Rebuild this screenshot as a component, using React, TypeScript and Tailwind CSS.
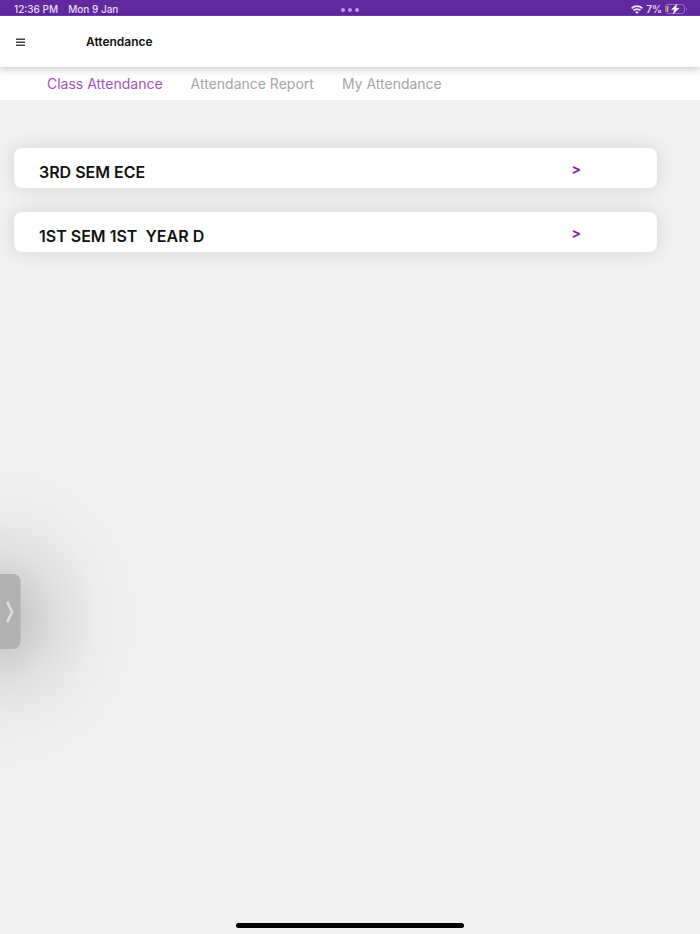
import { useState } from 'react';

const tabs = ['Class Attendance', 'Attendance Report', 'My Attendance'];

const classes = ['3RD SEM ECE', '1ST SEM 1ST  YEAR D'];

function StatusBar() {
	return (
		<div className="relative flex h-4 items-center justify-between border-b border-[#7540b5] bg-[#6128a0] pt-[3px] pr-3 pl-3.5 text-[10px] leading-3 font-medium text-[#e9def5]">
			<div className="flex gap-2.5">
				<span>12:36 PM</span>
				<span>Mon 9 Jan</span>
			</div>
			<div className="absolute inset-x-0 top-2 flex justify-center gap-[3px]">
				<span className="size-1 rounded-full bg-[#c990ff]" />
				<span className="size-1 rounded-full bg-[#c990ff]" />
				<span className="size-1 rounded-full bg-[#c990ff]" />
			</div>
			<div className="flex items-center gap-[3px] font-semibold">
				<svg width="12" height="9" viewBox="0 0 12 9" fill="none" stroke="#f2eafa" strokeWidth="1.7">
					<path d="M.6 3.300C3.600.4 8.400.4 11.400 3.300" />
					<path d="M2.500 5.400c1.900-1.800 5.100-1.800 7 0" />
					<path d="M4.100 6.900 6 8.900l1.900-2c-1-.9-2.800-.9-3.800 0Z" fill="#f2eafa" stroke="none" />
				</svg>
				<span>7%</span>
				<svg width="23" height="10" viewBox="0 0 23 10" fill="none">
					<rect x=".5" y=".5" width="19" height="9" rx="2.500" stroke="#9a72c6" />
					<rect x="1.500" y="2" width="2" height="6" rx=".8" fill="#d9b37c" />
					<path d="M21 3.500c1.200.4 1.200 2.600 0 3Z" fill="#9a72c6" />
					<path d="M11.800.2 6.400 5.600h3L8 9.900l6.200-5.600h-3.300Z" fill="#fff" stroke="#fff" strokeWidth=".4" />
				</svg>
			</div>
		</div>
	);
}

export default function App() {
	const [active, setActive] = useState(tabs[0]);

	return (
		<div className="relative flex min-h-screen flex-col overflow-hidden bg-[#f1f1f1] font-['Inter',sans-serif]">
			<StatusBar />

			<header className="relative z-10 flex h-[51px] items-center bg-white px-4 shadow-[0_2px_8px_rgba(0,0,0,0.24)]">
				<button type="button" aria-label="Menu" className="flex w-[70px] items-center">
					<svg width="9" height="8" viewBox="0 0 9 8" stroke="#444" strokeWidth="1.400">
						<path d="M0 1.200h9M0 4.200h9M0 7.200h9" />
					</svg>
				</button>
				<h1 className="text-[12px] leading-4 font-semibold text-[#111111]">Attendance</h1>
			</header>

			<nav className="flex h-[33px] items-center gap-7 bg-white pl-[47px]">
				{tabs.map((tab) => (
					<button
						key={tab}
						type="button"
						onClick={() => setActive(tab)}
						className={`text-[14px] leading-5 font-normal ${active === tab ? 'text-[#a452ba]' : 'text-[#a6a6a6]'}`}
					>
						{tab}
					</button>
				))}
			</nav>

			<main className="flex flex-1 flex-col gap-6 pt-12 pr-[43px] pl-3.5">
				{classes.map((name) => (
					<button
						key={name}
						type="button"
						className="flex h-10 items-center justify-between rounded-lg bg-white pr-[76px] pl-[25px] shadow-[0_0_20px_rgba(0,0,0,0.12)]"
					>
						<span className="pt-[7px] text-[16px] leading-5 font-semibold whitespace-pre text-[#111111]">{name}</span>
						<span className="pt-0.5 text-[14px] leading-5 font-bold text-[#8e24aa]">&gt;</span>
					</button>
				))}
			</main>

			{/* Slide-over handle */}
			<div className="pointer-events-none absolute top-[443px] -left-40 h-[350px] w-80 bg-[radial-gradient(closest-side,rgba(0,0,0,0.21),rgba(0,0,0,0.14)_18%,rgba(0,0,0,0.07)_38%,rgba(0,0,0,0.02)_62%,transparent_95%)]" />
			<button
				type="button"
				aria-label="Show side app"
				className="absolute top-[574px] left-0 flex h-[75px] w-[21px] items-center justify-end rounded-r-lg border-r border-[#bebebe] bg-[#b1b1b1] pr-1.5"
			>
				<svg width="8" height="22" viewBox="0 0 8 22" fill="none" stroke="#dcdce0" strokeWidth="2.700" strokeLinecap="round" strokeLinejoin="round">
					<path d="M1.500 1.800 6.300 11 1.500 20.200" />
				</svg>
			</button>

			<div className="mx-auto mb-1.5 h-[5px] w-[228px] rounded-full bg-black" />
		</div>
	);
}
